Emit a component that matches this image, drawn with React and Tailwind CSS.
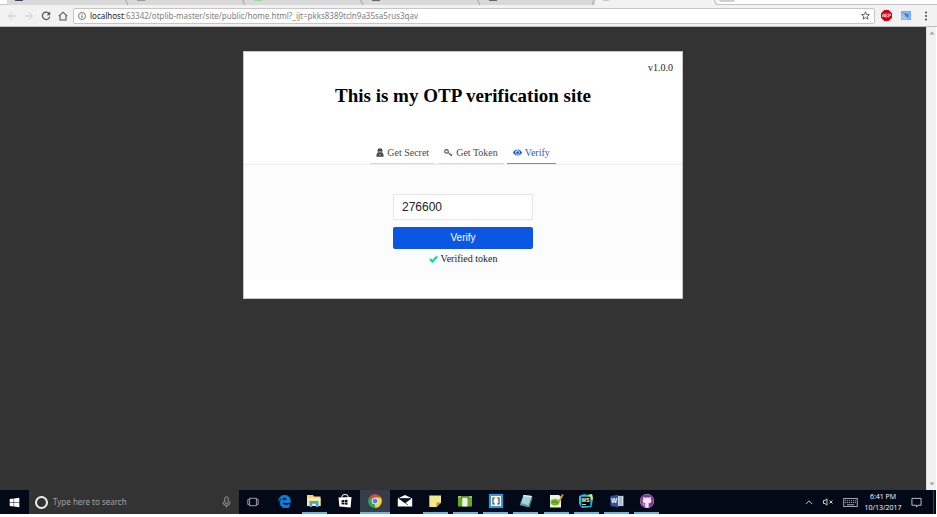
import React, { useState } from "react";
import { FaEye, FaWindows, FaEdgeLegacy, FaGithub } from "react-icons/fa";

const URL_PATH = ":63342/otplib-master/site/public/home.html?_ijt=pkks8389tcln9a35sa5rus3qav";

function SecretIcon() {
  return (
    <svg viewBox="0 0 16 18" className="h-[9px] w-2" fill="currentColor" aria-hidden="true">
      <path d="M3.6 3.8L4.6 0.6Q8 1.6 11.4 0.6L12.4 3.8L14.6 5Q8 7 1.4 5Z" />
      <path d="M3.4 6.2Q8 7.8 12.6 6.2L12.4 9Q15.4 10.4 15.4 17.4H0.6Q0.6 10.4 3.6 9Z" />
      <path d="M5 7.8L7.2 8.2L6.6 9.2H5ZM11 7.8L8.8 8.2L9.4 9.2H11ZM6.8 11.8L8 15.8L9.2 11.8L8 12.6Z" fill="#fff" />
    </svg>
  );
}

function KeyIcon() {
  return (
    <svg viewBox="0 0 18 16" className="h-2 w-[9px]" fill="none" stroke="currentColor" aria-hidden="true">
      <circle cx="5" cy="4.8" r="3.6" strokeWidth="2.1" />
      <path d="M8 7 L16 14 M10.6 10.5 L13.2 8 M13.4 13 L16 10.4" strokeWidth="2" />
    </svg>
  );
}

function CheckIcon() {
  return (
    <svg viewBox="0 0 18 16" className="h-2 w-[9px]" fill="none" stroke="currentColor" aria-hidden="true">
      <path d="M1.8 8.2L6.8 13L16.2 3.2" strokeWidth="4.4" />
    </svg>
  );
}

const browserTabs = [
  { mark: "bg-[#3f3f63]", width: "w-[122px]" },
  { mark: "bg-[#999]", width: "w-[117px]" },
  { mark: "bg-[#8fdc9b]", width: "w-[118px]" },
  { mark: "bg-[#666]", width: "w-[117px]" },
  { mark: "bg-[#666]", width: "w-[114px]" },
];

function TabStrip() {
  return (
    <div className="flex h-[5px] shrink-0 border-b border-[#c4c4c4] bg-white pl-[7px]">
      {browserTabs.map((tab, i) => (
        <div key={i} className={`${tab.width} relative flex h-[5px] bg-[#d9d9d9] pl-2`}>
          <span className={`${tab.mark} h-px w-2`} />
          <svg viewBox="0 0 4 5" className="ml-auto h-[5px] w-1" aria-hidden="true">
            <path d={i === 4 ? "M3.5 0 L1 5" : "M0.5 0 L3 5"} stroke="#a2a2a2" fill="none" />
          </svg>
        </div>
      ))}
      <div className="flex h-[5px] w-[123px] bg-[#f2f2f2] pl-2">
        <span className="h-px w-1.5 bg-[#c9c9c9]" />
        <svg viewBox="0 0 4 5" className="ml-auto h-[5px] w-1" aria-hidden="true">
          <path d="M0 0 L2 4 L4 5" stroke="#b5b5b5" fill="none" />
        </svg>
      </div>
      <span className="ml-px h-0.5 w-4 rounded-b-sm bg-[#cfcfcf]" />
    </div>
  );
}

function ToolButton({ label, className, children }) {
  return (
    <button type="button" aria-label={label} className={`flex h-4 items-center justify-center ${className}`}>
      {children}
    </button>
  );
}

function Toolbar() {
  return (
    <div className="flex h-[22px] shrink-0 items-center border-b border-[#bdbdbd] bg-[#f2f2f2] pr-px pl-[3px] font-['Noto_Sans',sans-serif] text-[#555]">
      <ToolButton label="Back" className="w-[17px] text-[#ccc]">
        <svg viewBox="0 0 10 10" className="size-2.5" fill="none" stroke="currentColor">
          <path d="M9 5H1.5M5 1.5L1.5 5L5 8.5" />
        </svg>
      </ToolButton>
      <ToolButton label="Forward" className="w-[17px] text-[#ccc]">
        <svg viewBox="0 0 10 10" className="size-2.5" fill="none" stroke="currentColor">
          <path d="M1 5H8.5M5 1.5L8.5 5L5 8.5" />
        </svg>
      </ToolButton>
      <ToolButton label="Reload" className="w-[17px]">
        <svg viewBox="0 0 10 10" className="size-2.5" fill="none" stroke="currentColor" strokeWidth="1.2">
          <path d="M8.3 3A3.7 3.7 0 1 0 8.7 5.6" />
          <path d="M9.2 0.6V4.2H5.6Z" fill="currentColor" stroke="none" />
        </svg>
      </ToolButton>
      <ToolButton label="Home" className="w-[17px]">
        <svg viewBox="0 0 10 10" className="size-2.5" fill="none" stroke="currentColor" strokeWidth="1.1">
          <path d="M0.8 5.2L5 1.2L9.2 5.2M2 4.6V9H8V4.6" />
        </svg>
      </ToolButton>
      <div className="ml-0.5 flex h-4 flex-1 items-center rounded-xs border border-[#c6c6c6] bg-white px-1">
        <svg viewBox="0 0 10 10" className="mr-1 size-2" fill="none" stroke="#555" aria-hidden="true">
          <circle cx="5" cy="5" r="4.4" />
          <path d="M5 4.4V7.4M5 2.4V3.5" strokeWidth="1.2" />
        </svg>
        <p className="flex-1 text-[8px] leading-3 whitespace-nowrap text-[#808080]">
          <span className="text-[#222]">localhost</span>
          {URL_PATH}
        </p>
        <button type="button" aria-label="Bookmark this page">
          <svg viewBox="0 0 12 12" className="size-[9px]" fill="none" stroke="#555" strokeWidth="1.2">
            <path d="M6 1L7.4 4.5L11.2 4.8L8.3 7.2L9.2 10.9L6 8.9L2.8 10.9L3.7 7.2L0.8 4.8L4.6 4.5Z" />
          </svg>
        </button>
      </div>
      <ToolButton label="AdBlock Plus" className="w-[22px]">
        <svg viewBox="0 0 20 20" className="size-[11px]">
          <path d="M6 0H14L20 6V14L14 20H6L0 14V6Z" fill="#d1000b" />
          <path d="M3 13V9.5Q3 7 4.7 7T6.4 9.5V13M3 10.8H6.4M8.5 7V13H10.5Q13.5 11.5 10.3 10Q13 8 10.5 7ZM14 13.5V7H15.5Q17.5 7 17.5 8.8T15.5 10.5H14" fill="none" stroke="#fff" strokeWidth="1.3" />
        </svg>
      </ToolButton>
      <ToolButton label="Cast" className="w-[18px]">
        <svg viewBox="0 0 20 18" className="h-[9px] w-2.5">
          <rect x="0" y="0" width="20" height="18" fill="#77a7f8" />
          <path d="M4 4H16V14H11" fill="#3b7ded" stroke="#e5efff" strokeWidth="1" />
          <path d="M1 7Q11 8 11 17M1 10.5Q7.5 11 7.5 17M1 14Q4 14 4 17" fill="none" stroke="#e5efff" strokeWidth="1.5" />
        </svg>
      </ToolButton>
      <ToolButton label="Menu" className="w-[21px]">
        <svg viewBox="0 0 4 10" className="h-2.5 w-1" fill="#555">
          <circle cx="2" cy="1.5" r="1.1" />
          <circle cx="2" cy="5" r="1.1" />
          <circle cx="2" cy="8.5" r="1.1" />
        </svg>
      </ToolButton>
    </div>
  );
}

function SiteTab({ icon, label, active }) {
  return (
    <a
      href="#"
      aria-current={active ? "page" : undefined}
      className={`flex h-6 items-center gap-[3px] border-b px-1.5 pt-0.5 ${
        active ? "border-[#5e90ec] text-[#1f5ce0]" : "border-[#d9d9d9] text-[#4a4a4a]"
      }`}
    >
      {icon}
      {label}
    </a>
  );
}

function OtpCard() {
  const [token, setToken] = useState("276600");
  return (
    <main className="w-[47.5%] min-w-80 self-start border border-[#c4c4c4] bg-white pb-[18px] font-['Liberation_Serif',serif] text-[10px] leading-3 text-[#222]">
      <p className="pt-2.5 pr-[9px] text-right">v1.0.0</p>
      <h1 className="mt-2.5 text-center text-[19px] leading-6 font-bold text-black">This is my OTP verification site</h1>
      <nav className="mt-8 flex justify-center gap-[3px] bg-white">
        <SiteTab icon={<SecretIcon />} label="Get Secret" />
        <SiteTab icon={<KeyIcon />} label="Get Token" />
        <SiteTab icon={<FaEye className="size-[9px]" />} label="Verify" active />
      </nav>
      <section className="border-t border-[#ececec] bg-[#fcfcfc] pt-[29px] pb-[15px]">
        <form className="mx-auto w-[140px]" onSubmit={(e) => e.preventDefault()}>
          <input
            aria-label="Token"
            value={token}
            onChange={(e) => setToken(e.target.value)}
            className="block h-[26px] w-full border border-[#e6e6e6] bg-white px-2 font-['Liberation_Sans',sans-serif] text-[12px] text-[#222]"
          />
          <button
            type="submit"
            className="mt-[7px] block h-[22px] w-full rounded-xs bg-[#0b57e3] font-['Liberation_Sans',sans-serif] text-[10px] text-white"
          >
            Verify
          </button>
          <p className="mt-1 flex items-center justify-center gap-[3px]">
            <span className="text-[#16d1a5]"><CheckIcon /></span>
            Verified token
          </p>
        </form>
      </section>
    </main>
  );
}

function Scrollbar() {
  return (
    <div className="flex w-2.5 shrink-0 flex-col items-center justify-between border-l border-[#dcdcdc] bg-[#f1f1f1] py-1">
      <svg viewBox="0 0 6 4" className="h-1 w-1.5" fill="#a3a3a3" aria-hidden="true"><path d="M0.5 3.5L3 0.5L5.5 3.5Z" /></svg>
      <svg viewBox="0 0 6 4" className="h-1 w-1.5" fill="#a3a3a3" aria-hidden="true"><path d="M0.5 0.5L3 3.5L5.5 0.5Z" /></svg>
    </div>
  );
}

const icon = "size-4";

const apps = [
  { name: "Edge", glyph: <FaEdgeLegacy className="size-[13px] stroke-[#0a84e0] stroke-30 text-[#0a84e0]" /> },
  {
    name: "File Explorer",
    open: true,
    glyph: (
      <svg viewBox="0 0 16 16" className={icon}>
        <path d="M1 2H7L8 3.5H14.5V13H1Z" fill="#f7d774" />
        <path d="M1 5H14.5V13H1Z" fill="#fde99d" />
        <path d="M3.5 14V8H12.5V14H10V10.7H6V14Z" fill="#3fa9df" />
      </svg>
    ),
  },
  {
    name: "Store",
    glyph: (
      <svg viewBox="0 0 16 16" className={icon}>
        <path d="M5 5V3.2Q5 1.5 8 1.5T11 3.2V5" fill="none" stroke="#fff" />
        <path d="M1.5 4.5L14.5 4L13.6 14.5L2.4 13.5Z" fill="#fff" />
        <path d="M4.5 7.2L7 7V9H4.5ZM7.6 7L10.5 6.8V9H7.6ZM4.5 9.6H7V11.5L4.5 11.3ZM7.6 9.6H10.5V11.8L7.6 11.5Z" fill="#071022" />
      </svg>
    ),
  },
  {
    name: "Chrome",
    open: true,
    focused: true,
    glyph: (
      <svg viewBox="0 0 16 16" className={icon}>
        <path d="M8 8L2.1 4.6A6.8 6.8 0 0 1 13.9 4.6Z" fill="#e04a3c" />
        <path d="M8 8L2.1 4.6A6.8 6.8 0 0 0 8 14.8Z" fill="#2da94f" />
        <path d="M8 8V14.8A6.8 6.8 0 0 0 13.9 4.6H8Z" fill="#f9ce3f" />
        <circle cx="8" cy="8" r="3.3" fill="#fff" />
        <circle cx="8" cy="8" r="2.5" fill="#4285f4" />
      </svg>
    ),
  },
  {
    name: "Mail",
    glyph: (
      <svg viewBox="0 0 16 16" className={icon}>
        <path d="M0.8 5.5L8 2L15.2 5.5V13.5H0.8Z" fill="#fff" />
        <path d="M2 5.5H14L8 10Z M8 9.5L11 12" fill="#071022" stroke="#071022" strokeWidth="0.7" />
      </svg>
    ),
  },
  {
    name: "Sticky Notes",
    open: true,
    glyph: (
      <svg viewBox="0 0 16 16" className={icon}>
        <path d="M2.3 2.5H14V9.5L9.5 14H2.3Z" fill="#f4e88d" />
        <path d="M14 9.5H9.5V14Z" fill="#b59c2f" />
      </svg>
    ),
  },
  {
    name: "File manager",
    open: true,
    glyph: (
      <svg viewBox="0 0 16 16" className={icon}>
        <rect x="1" y="3" width="14" height="10.5" fill="#6aa52c" />
        <path d="M1 3H15V5H1Z" fill="#92c248" />
        <path d="M4.5 6V3.8H11.5V6" fill="none" stroke="#4c791c" />
        <rect x="5.3" y="5" width="5.2" height="8.5" fill="#eef2e8" />
      </svg>
    ),
  },
  {
    name: "Brackets",
    open: true,
    glyph: (
      <svg viewBox="0 0 16 16" className={icon}>
        <rect x="0.9" y="0.9" width="14.2" height="14.2" fill="#2a9be0" />
        <rect x="3" y="3" width="10" height="10" fill="#fff" />
        <path d="M7 5H5V11H7M9 5H11V11H9" fill="none" stroke="#444" strokeWidth="1.2" />
      </svg>
    ),
  },
  {
    name: "Notepad",
    open: true,
    glyph: (
      <svg viewBox="0 0 16 16" className={icon}>
        <path d="M5.5 2L14 3L10.5 14L2 12Z" fill="#9fd4df" />
        <path d="M14 3L14.5 5L11.5 14.5L10.5 14Z" fill="#597d86" />
        <path d="M5.5 2L14 3L13.6 4.2L5.1 3.3Z" fill="#e6f6f8" />
        <path d="M2 12L10.5 14L11 12.5L2.8 10Z" fill="#4b9aaf" />
      </svg>
    ),
  },
  {
    name: "Notepad++",
    open: true,
    glyph: (
      <svg viewBox="0 0 16 16" className={icon}>
        <path d="M2 2H11L13 4V14.5H2Z" fill="#edf3df" />
        <ellipse cx="7" cy="9.3" rx="4.4" ry="3.2" fill="#6fbd25" />
        <path d="M4 9.5Q6 7.5 8 9.2T10.6 9" fill="none" stroke="#3a7a1b" strokeWidth="0.9" />
        <path d="M14 1L15.6 2L11.3 10L10 11L10 9Z" fill="#d99a35" />
      </svg>
    ),
  },
  {
    name: "WebStorm",
    open: true,
    glyph: (
      <svg viewBox="0 0 16 16" className={icon}>
        <path d="M1 3L6 1L10 2L14 1L15 6L13.5 14L4 15L1 11Z" fill="#15c5d8" />
        <path d="M10 2L14 1L15 6L12 7Z" fill="#d8ed46" />
        <rect x="3.2" y="3.8" width="9.2" height="9.2" fill="#050505" />
        <text x="3.5" y="8.6" fill="#fff" fontFamily="Liberation Sans, sans-serif" fontSize="5" fontWeight="700">WS</text>
        <path d="M4 11.5H8" stroke="#fff" strokeWidth="0.8" />
      </svg>
    ),
  },
  {
    name: "Word",
    open: true,
    glyph: (
      <svg viewBox="0 0 16 16" className={icon}>
        <rect x="8" y="3" width="6.5" height="10" fill="#fff" stroke="#2b579a" strokeWidth="0.7" />
        <path d="M9.5 5H13.5M9.5 7H13.5M9.5 9H13.5M9.5 11H13.5" stroke="#2b579a" strokeWidth="0.8" />
        <path d="M1.5 3L9 1.8V14.2L1.5 13Z" fill="#2b579a" />
        <text x="2" y="10.3" fill="#fff" fontFamily="Liberation Sans, sans-serif" fontSize="6.5" fontWeight="700">W</text>
      </svg>
    ),
  },
  {
    name: "GitHub Desktop",
    open: true,
    glyph: (
      <span className="flex size-3.5 items-center justify-center rounded-full bg-[#f3e5f6]">
        <FaGithub className="size-3.5 text-[#84369b]" />
      </span>
    ),
  },
];

function Taskbar() {
  return (
    <footer className="mr-px flex h-6 shrink-0 items-stretch bg-[#040918] font-['Open_Sans',sans-serif] text-white">
      <button type="button" aria-label="Start" className="flex w-[29px] items-center justify-center">
        <FaWindows className="size-[11px]" />
      </button>
      <label className="flex w-[210px] items-center bg-[#333] pr-2 pl-1.5 font-['Noto_Sans',sans-serif]">
        <span className="size-[13px] rounded-full border-2 border-[#eee]" />
        <input
          aria-label="Search"
          placeholder="Type here to search"
          className="ml-[5px] min-w-0 flex-1 text-[8px] placeholder:text-[#a3a3a3]"
        />
        <svg viewBox="0 0 10 14" className="h-3 w-[9px]" fill="none" stroke="#aaa" aria-hidden="true">
          <rect x="3" y="1" width="4" height="8" rx="2" />
          <path d="M1 6.5V8Q1 11 5 11T9 8V6.5M5 11V13.5" />
        </svg>
      </label>
      <button type="button" aria-label="Task view" className="flex w-[30px] items-center justify-center pr-0.5">
        <svg viewBox="0 0 14 12" className="h-2.5 w-3" fill="none" stroke="#bbb">
          <rect x="3" y="1.5" width="8" height="9" />
          <path d="M2 3H0.8V9H2M12 3H13.2V9H12" />
        </svg>
      </button>
      <div className="grid w-[393px] grid-cols-13">
        {apps.map((app) => (
          <button
            key={app.name}
            type="button"
            aria-label={app.name}
            className={`flex flex-col items-center ${app.focused ? "bg-[#363c4a]" : ""}`}
          >
            <span className="flex flex-1 items-center justify-center">{app.glyph}</span>
            <span
              className={`h-0.5 ${app.focused ? "w-full" : "w-[25px]"} ${app.open ? "bg-[#70b4e4]" : "bg-transparent"}`}
            />
          </button>
        ))}
      </div>
      <div className="ml-auto flex items-center">
        <button type="button" aria-label="Show hidden icons" className="flex w-4 justify-center">
          <svg viewBox="0 0 10 6" className="h-[5px] w-2" fill="none" stroke="#ccc" strokeWidth="1.2"><path d="M1 5L5 1L9 5" /></svg>
        </button>
        <button type="button" aria-label="Sound muted" className="flex w-[22px] justify-center">
          <svg viewBox="0 0 12 8" className="h-2 w-3" fill="none" stroke="#ccc">
            <path d="M1.5 2.5H3L5 0.8V7.2L3 5.5H1.5ZM7.5 2.5L10.5 5.5M10.5 2.5L7.5 5.5" />
          </svg>
        </button>
        <button type="button" aria-label="Touch keyboard" className="flex w-[22px] justify-center">
          <svg viewBox="0 0 16 10" className="h-[9px] w-[15px]" fill="none" stroke="#bbb">
            <rect x="0.5" y="0.5" width="15" height="9" />
            <path d="M2 3H14M2 5H14" strokeDasharray="1.2 1" />
            <path d="M4 7.5H12" />
          </svg>
        </button>
        <div className="w-11 text-center text-[7px] leading-[11px]">
          <p>6:41 PM</p>
          <p>10/13/2017</p>
        </div>
        <button type="button" aria-label="Notifications" className="flex w-[22px] justify-center">
          <svg viewBox="0 0 12 12" className="size-[11px]" fill="none" stroke="#ccc">
            <path d="M1 1.5H11V9H7.5L6 11L6 9H1Z" />
          </svg>
        </button>
        <span className="ml-1.5 h-6 w-[3px] border-l border-[#3c4250]" />
      </div>
    </footer>
  );
}

export default function App() {
  return (
    <div className="flex h-screen flex-col bg-white pb-[3px]">
      <TabStrip />
      <Toolbar />
      <div className="mr-px flex min-h-0 flex-1 bg-[#333]">
        <div className="flex flex-1 justify-center pt-6">
          <OtpCard />
        </div>
        <Scrollbar />
      </div>
      <Taskbar />
    </div>
  );
}
